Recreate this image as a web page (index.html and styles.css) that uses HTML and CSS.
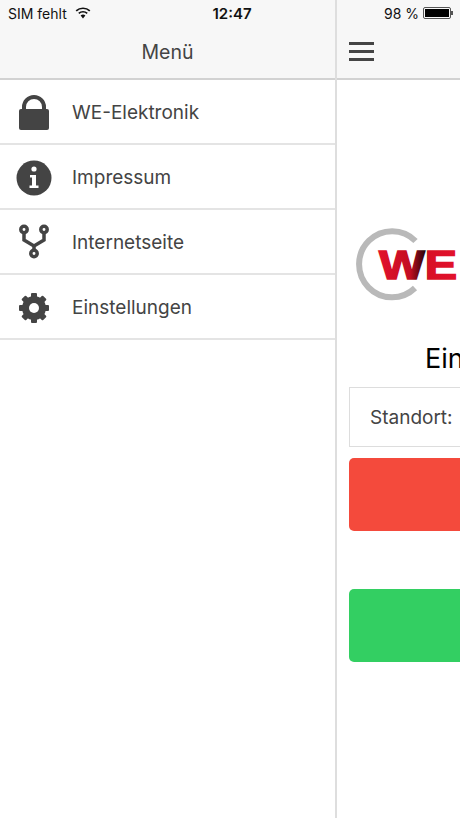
FILE: index.html
```html
<!DOCTYPE html>
<html>
  <head>
    <title>WE-Elektronik</title>
    <meta http-equiv="Content-Type" content="text/html; charset=UTF-8"/>
    <link rel="stylesheet" href="styles.css">
  </head>
  <body>
    <div class="status">
      <div class="status-left">
        <span>SIM fehlt</span>
        <svg class="wifi" width="16" height="12" viewBox="0 0 16 12">
          <path d="M8 11.5 L5.6 8.6 A3.6 3.6 0 0 1 10.4 8.6 Z" fill="#111"/>
          <path d="M3.8 6.4 A6.2 6.2 0 0 1 12.2 6.4" fill="none" stroke="#111" stroke-width="1.7"/>
          <path d="M1.2 3.9 A10 10 0 0 1 14.8 3.9" fill="none" stroke="#111" stroke-width="1.7"/>
        </svg>
      </div>
      <div class="status-time">12:47</div>
      <div class="status-right">
        <span>98 %</span>
        <span class="battery"><span class="battery-level"></span></span>
      </div>
    </div>

    <div class="app">
      <div class="menu">
        <div class="bar bar-title">Menü</div>
        <ul class="menu-list">
          <li class="menu-item">
            <span class="menu-icon">
              <svg width="34" height="36" viewBox="0 0 34 36">
                <path d="M7 16 V12 A10 10 0 0 1 27 12 V16" fill="none" stroke="#444" stroke-width="4"/>
                <rect x="2" y="14" width="30" height="21" rx="2" fill="#444"/>
              </svg>
            </span>
            WE-Elektronik
          </li>
          <li class="menu-item">
            <span class="menu-icon">
              <svg width="36" height="36" viewBox="0 0 36 36">
                <circle cx="18" cy="18" r="17.5" fill="#444"/>
                <circle cx="18" cy="9" r="2.6" fill="#fff"/>
                <path d="M14 15 H20 V25.5 H22.5 V28 H13.5 V25.5 H16 V17.5 H14 Z" fill="#fff"/>
              </svg>
            </span>
            Impressum
          </li>
          <li class="menu-item">
            <span class="menu-icon">
              <svg width="34" height="38" viewBox="0 0 34 38">
                <g fill="none" stroke="#444" stroke-width="3.5">
                  <circle cx="7" cy="5.5" r="3.2"/>
                  <circle cx="27" cy="5.5" r="3.2"/>
                  <circle cx="17" cy="29.5" r="3.2"/>
                  <path d="M7 9 V16 L17 22 L27 16 V9 M17 22 V26"/>
                </g>
              </svg>
            </span>
            Internetseite
          </li>
          <li class="menu-item">
            <span class="menu-icon">
              <svg width="32" height="32" viewBox="0 0 32 32">
                <g fill="#444">
                  <circle cx="16" cy="16" r="12"/>
                  <rect x="13" y="1" width="6" height="30" rx="1"/>
                  <rect x="13" y="1" width="6" height="30" rx="1" transform="rotate(45 16 16)"/>
                  <rect x="13" y="1" width="6" height="30" rx="1" transform="rotate(90 16 16)"/>
                  <rect x="13" y="1" width="6" height="30" rx="1" transform="rotate(135 16 16)"/>
                </g>
                <circle cx="16" cy="16" r="5" fill="#fff"/>
              </svg>
            </span>
            Einstellungen
          </li>
        </ul>
      </div>

      <div class="main">
        <div class="bar">
          <div class="burger"><span></span><span></span><span></span></div>
        </div>
        <div class="page">
          <svg class="logo" width="123" height="80" viewBox="0 0 123 80">
            <defs>
              <linearGradient id="we" gradientUnits="userSpaceOnUse" x1="26" x2="104" y1="0" y2="0">
                <stop offset="0" stop-color="#e2122c"/>
                <stop offset="0.4" stop-color="#c30d22"/>
                <stop offset="0.61" stop-color="#1a0305"/>
                <stop offset="0.625" stop-color="#d80f26"/>
                <stop offset="1" stop-color="#e2122c"/>
              </linearGradient>
            </defs>
            <path d="M62.5 16 A33 33 0 1 0 62 63" fill="none" stroke="#b9b9b9" stroke-width="6"/>
            <text class="logo-text" x="26" y="54" font-size="40" textLength="78" lengthAdjust="spacingAndGlyphs" fill="url(#we)" stroke="url(#we)" stroke-width="1.5">WE</text>
          </svg>
          <h1 class="title">Einfahrt</h1>
          <div class="field">Standort:</div>
          <div class="btn btn-red"></div>
          <div class="btn btn-green"></div>
        </div>
      </div>
    </div>
  </body>
</html>
```

FILE: styles.css
```css
html, body {
  margin: 0;
  padding: 0;
  height: 100%;
  overflow: hidden;
  background: #fff;
}
body {
  font-family: 'Inter', 'Liberation Sans', sans-serif;
  color: #444;
}

.status {
  position: absolute;
  top: 0;
  left: 0;
  width: 460px;
  height: 26px;
  box-sizing: border-box;
  padding: 0 8px;
  display: grid;
  grid-template-columns: 1fr auto 1fr;
  align-items: center;
  font-size: 14px;
  color: #111;
}
.status-left {
  display: flex;
  align-items: center;
  gap: 8px;
}
.status-time {
  font-weight: 600;
  font-size: 15px;
  padding-left: 4px;
}
.status-right {
  display: flex;
  align-items: center;
  justify-content: flex-end;
  gap: 4px;
}
.battery {
  position: relative;
  display: block;
  width: 24px;
  height: 8px;
  padding: 1px;
  border: 1px solid #555;
  border-radius: 2px;
  margin-right: 1px;
}
.battery:after {
  content: "";
  position: absolute;
  right: -3px;
  top: 3px;
  width: 2px;
  height: 4px;
  background: #555;
}
.battery-level {
  display: block;
  height: 100%;
  background: #000;
}

.app {
  display: flex;
  height: 818px;
}
.menu {
  flex: 0 0 335px;
  border-right: 2px solid #dedede;
}
.main {
  flex: 1;
  overflow: hidden;
}

.bar {
  height: 80px;
  box-sizing: border-box;
  background: #f7f7f7;
  border-bottom: 2px solid #d2d2d2;
}
.bar-title {
  padding-top: 40px;
  text-align: center;
  font-size: 19.5px;
  line-height: 24px;
}

.menu-list {
  list-style: none;
  margin: 0;
  padding: 0;
}
.menu-item {
  display: flex;
  align-items: center;
  height: 65px;
  box-sizing: border-box;
  padding-top: 2px;
  border-bottom: 2px solid #e4e4e4;
  font-size: 19px;
}
.menu-icon {
  flex: 0 0 72px;
  box-sizing: border-box;
  padding-right: 5px;
  display: flex;
  justify-content: center;
}

.burger {
  display: flex;
  flex-direction: column;
  gap: 5px;
  width: 25px;
  padding: 42px 0 0 12px;
}
.burger span {
  display: block;
  height: 3px;
  background: #444;
}

.page {
  width: 375px;
  box-sizing: border-box;
  padding: 0 12px;
}
.logo {
  display: block;
  margin: 145px 0 0 4px;
}
.logo-text {
  font-family: 'Liberation Sans', sans-serif;
  font-weight: bold;
}
.title {
  margin: 38px 0 0 76px;
  font-size: 27px;
  line-height: 32px;
  font-weight: 400;
  color: #000;
}
.field {
  margin-top: 12px;
  height: 60px;
  box-sizing: border-box;
  border: 1px solid #ddd;
  padding-left: 20px;
  line-height: 60px;
  font-size: 19px;
}
.btn {
  height: 73px;
  border-radius: 5px;
}
.btn-red {
  margin-top: 11px;
  background: #f44a3c;
}
.btn-green {
  margin-top: 58px;
  background: #33cf62;
}
```
